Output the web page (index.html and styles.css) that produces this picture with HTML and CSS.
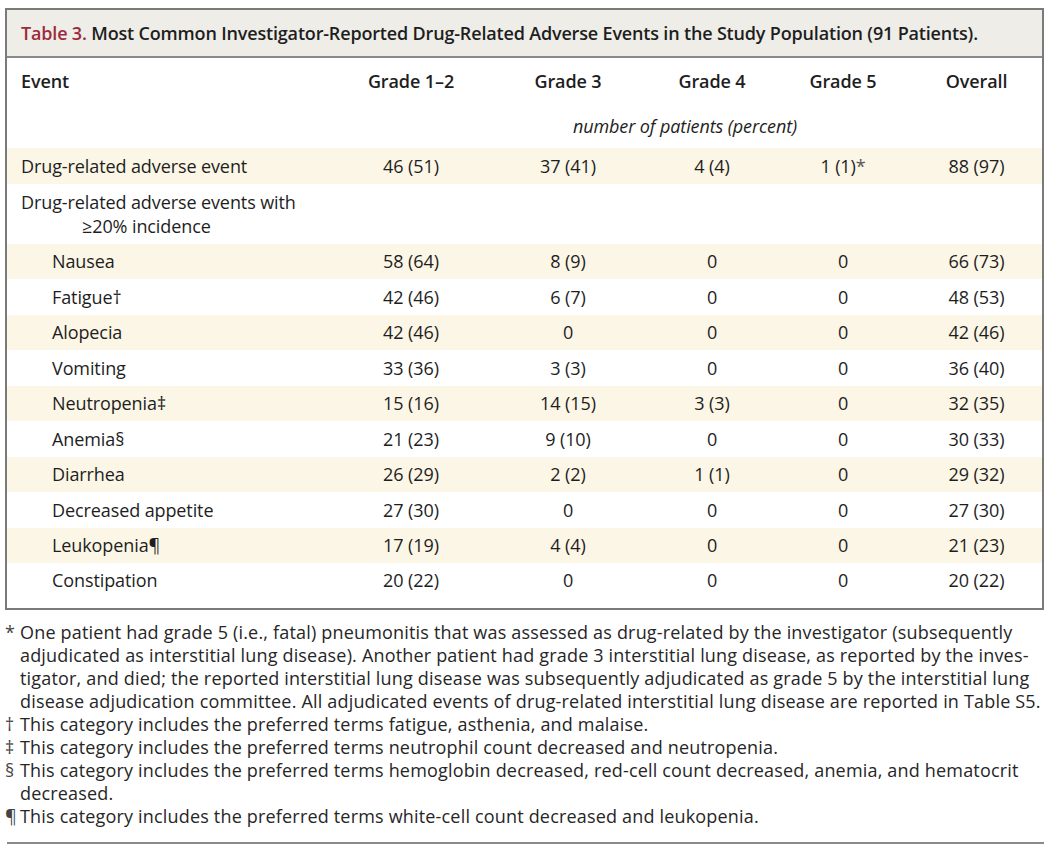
FILE: index.html
```html
<!DOCTYPE html>
<html lang="en">
<head>
<meta charset="utf-8">
<title>Table 3</title>
<link rel="stylesheet" href="styles.css">
</head>
<body>
<div class="page">
  <div class="tbl">
    <div class="title"><span class="tnum">Table 3.</span> Most Common Investigator-Reported Drug-Related Adverse Events in the Study Population (91 Patients).</div>
    <div class="row head">
      <div class="c0">Event</div>
      <div class="c">Grade 1–2</div>
      <div class="c">Grade 3</div>
      <div class="c">Grade 4</div>
      <div class="c">Grade 5</div>
      <div class="c">Overall</div>
    </div>
    <div class="row unit">
      <div class="c0"></div>
      <div class="c"></div>
      <div class="span">number of patients (percent)</div>
      <div class="c"></div>
    </div>
    <div class="row hl">
      <div class="c0">Drug-related adverse event</div>
      <div class="c">46 (51)</div>
      <div class="c">37 (41)</div>
      <div class="c">4 (4)</div>
      <div class="c">1 (1)<span class="ast">*</span></div>
      <div class="c">88 (97)</div>
    </div>
    <div class="row multi">
      <div class="c0 hang">Drug-related adverse events with ≥20% incidence</div>
      <div class="c"></div><div class="c"></div><div class="c"></div><div class="c"></div><div class="c"></div>
    </div>
    <div class="row hl">
      <div class="c0 ind">Nausea</div>
      <div class="c">58 (64)</div><div class="c">8 (9)</div><div class="c">0</div><div class="c">0</div><div class="c">66 (73)</div>
    </div>
    <div class="row">
      <div class="c0 ind">Fatigue†</div>
      <div class="c">42 (46)</div><div class="c">6 (7)</div><div class="c">0</div><div class="c">0</div><div class="c">48 (53)</div>
    </div>
    <div class="row hl">
      <div class="c0 ind">Alopecia</div>
      <div class="c">42 (46)</div><div class="c">0</div><div class="c">0</div><div class="c">0</div><div class="c">42 (46)</div>
    </div>
    <div class="row">
      <div class="c0 ind">Vomiting</div>
      <div class="c">33 (36)</div><div class="c">3 (3)</div><div class="c">0</div><div class="c">0</div><div class="c">36 (40)</div>
    </div>
    <div class="row hl">
      <div class="c0 ind">Neutropenia‡</div>
      <div class="c">15 (16)</div><div class="c">14 (15)</div><div class="c">3 (3)</div><div class="c">0</div><div class="c">32 (35)</div>
    </div>
    <div class="row">
      <div class="c0 ind">Anemia§</div>
      <div class="c">21 (23)</div><div class="c">9 (10)</div><div class="c">0</div><div class="c">0</div><div class="c">30 (33)</div>
    </div>
    <div class="row hl">
      <div class="c0 ind">Diarrhea</div>
      <div class="c">26 (29)</div><div class="c">2 (2)</div><div class="c">1 (1)</div><div class="c">0</div><div class="c">29 (32)</div>
    </div>
    <div class="row">
      <div class="c0 ind">Decreased appetite</div>
      <div class="c">27 (30)</div><div class="c">0</div><div class="c">0</div><div class="c">0</div><div class="c">27 (30)</div>
    </div>
    <div class="row hl">
      <div class="c0 ind">Leukopenia¶</div>
      <div class="c">17 (19)</div><div class="c">4 (4)</div><div class="c">0</div><div class="c">0</div><div class="c">21 (23)</div>
    </div>
    <div class="row last">
      <div class="c0 ind">Constipation</div>
      <div class="c">20 (22)</div><div class="c">0</div><div class="c">0</div><div class="c">0</div><div class="c">20 (22)</div>
    </div>
  </div>
  <div class="notes">
    <p class="note"><span class="mk">*</span>One patient had grade 5 (i.e., fatal) pneumonitis that was assessed as drug-related by the investigator (subsequently<br>adjudicated as interstitial lung disease). Another patient had grade 3 interstitial lung disease, as reported by the inves-<br>tigator, and died; the reported interstitial lung disease was subsequently adjudicated as grade 5 by the interstitial lung<br>disease adjudication committee. All adjudicated events of drug-related interstitial lung disease are reported in Table S5.</p>
    <p class="note"><span class="mk">†</span>This category includes the preferred terms fatigue, asthenia, and malaise.</p>
    <p class="note"><span class="mk">‡</span>This category includes the preferred terms neutrophil count decreased and neutropenia.</p>
    <p class="note"><span class="mk">§</span>This category includes the preferred terms hemoglobin decreased, red-cell count decreased, anemia, and hematocrit<br>decreased.</p>
    <p class="note"><span class="mk">¶</span>This category includes the preferred terms white-cell count decreased and leukopenia.</p>
  </div>
</div>
</body>
</html>
```
FILE: styles.css
```css
html, body {
  margin: 0;
  padding: 0;
  background: #ffffff;
}
body {
  font-family: "Open Sans", "Noto Sans", sans-serif;
  color: #1e1e1e;
  font-size: 18px;
}
.page {
  padding: 8px 12px 0 5px;
  width: 1039px;
}
.tbl {
  border: 2px solid #7a7a7a;
  width: 1035px;
}
.title {
  background: #eeede7;
  border-bottom: 2px solid #8a8a8a;
  height: 46px;
  line-height: 46px;
  padding-left: 14px;
  font-weight: 600;
  font-size: 18px;
  color: #1e1e1e;
  letter-spacing: -0.17px;
}
.tnum {
  color: #9c2b3c;
}
.row {
  display: grid;
  grid-template-columns: 328px 152px 162px 126px 136px 131px;
  align-items: center;
  height: 35.5px;
  letter-spacing: -0.1px;
}
.row.hl {
  background: #fcf6e6;
}
.row.head {
  height: 45px;
  font-weight: 600;
}
.row.unit {
  height: 45px;
  grid-template-columns: 328px 152px 424px 131px;
}
.row.multi {
  height: 60px;
  align-items: start;
}
.row.last {
  height: 45px;
  align-items: start;
}
.row.last > div {
  line-height: 35.5px;
}
.c0 {
  padding-left: 14px;
}
.c0.ind {
  padding-left: 45px;
}
.c0.hang {
  padding-left: 75px;
  text-indent: -61px;
  line-height: 24px;
  padding-top: 6px;
}
.c {
  text-align: center;
}
.span {
  text-align: center;
  font-style: italic;
  padding-right: 28px;
}
.ast {
  color: #555;
}
.notes {
  margin-top: 11px;
  border-bottom: 2px solid #8a8a8a;
  padding-bottom: 14px;
  margin-left: 2px;
}
.note {
  margin: 0;
  position: relative;
  padding-left: 13px;
  line-height: 23px;
  font-size: 18px;
  color: #262626;
  white-space: nowrap;
  letter-spacing: 0.18px;
}
.mk {
  position: absolute;
  left: -2px;
  top: 0;
  color: #444;
}
```
